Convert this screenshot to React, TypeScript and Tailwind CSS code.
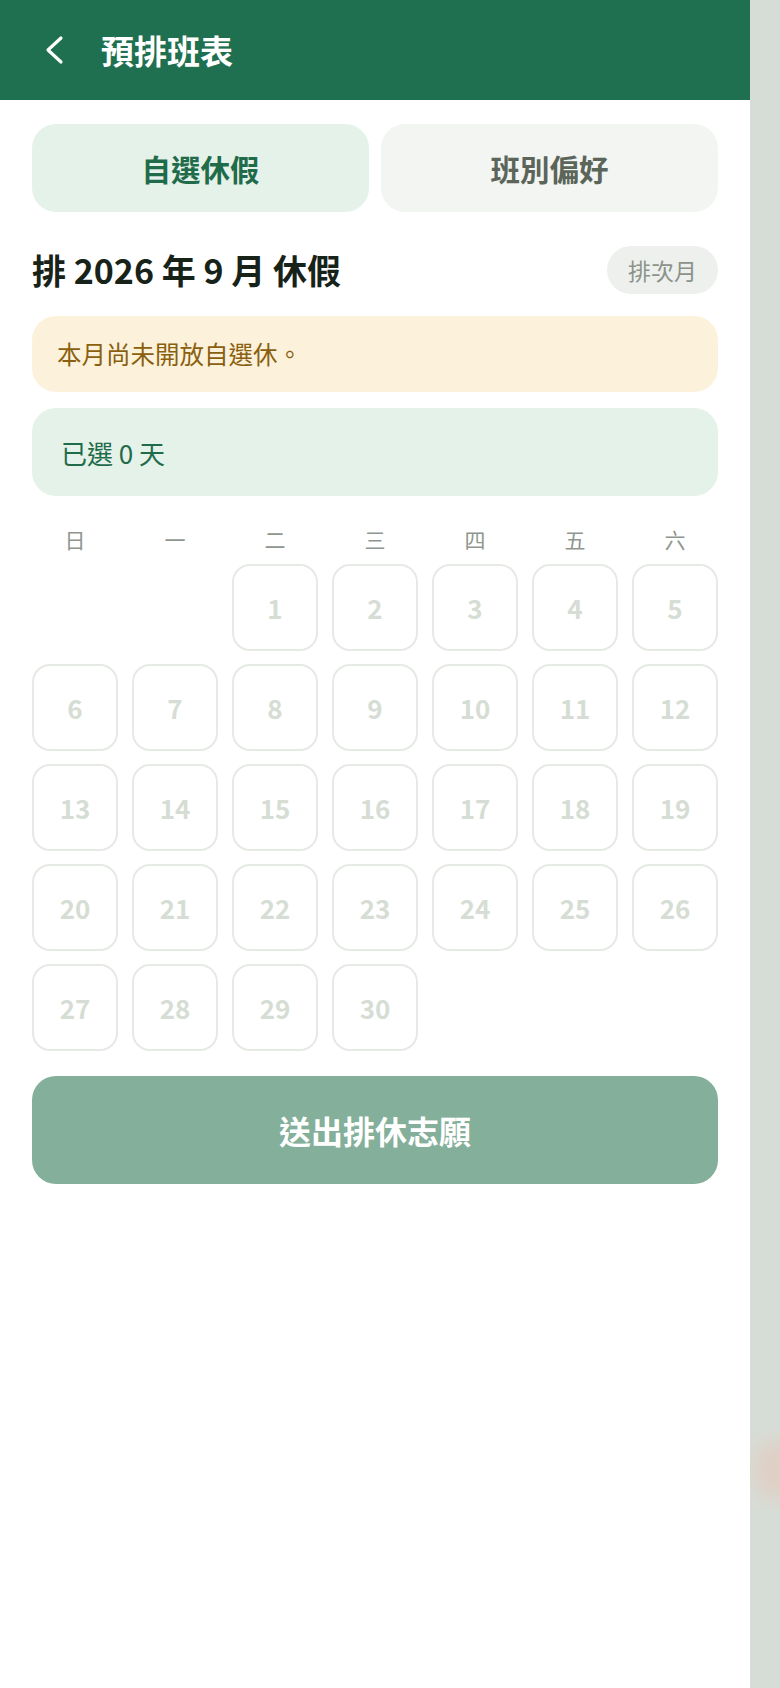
import React from "react";

const days: (number | null)[] = [null, null, ...Array.from({ length: 30 }, (_, i) => i + 1)];
const weekdays = ["日", "一", "二", "三", "四", "五", "六"];

export default function App() {
  return (
    <div
      className="relative flex min-h-[1688px] w-full overflow-hidden bg-[#d6ddd6]"
      style={{ fontFamily: '"Noto Sans CJK TC", "Noto Sans", sans-serif' }}
    >
      <div className="absolute left-[750px] top-[1430px] h-[80px] w-[30px] overflow-hidden">
        <div className="absolute left-[4px] top-[10px] h-[60px] w-[50px] rounded-full bg-[#e7c6ba] opacity-60 blur-[10px]" />
      </div>
      <div className="relative z-10 flex min-h-[1688px] w-[750px] flex-col bg-white">
        <header className="flex h-[100px] items-center bg-[#1f7050] px-[40px]">
          <svg width="26" height="30" viewBox="0 0 26 30" fill="none" className="ml-[2px]">
            <polyline points="19,3 6,15 19,27" stroke="white" strokeWidth="3.2" strokeLinecap="round" strokeLinejoin="round" />
          </svg>
          <h1 className="ml-[33px] text-[33px] font-bold leading-none text-white">預排班表</h1>
        </header>

        <div className="flex flex-col px-[32px]">
          <div className="mt-[24px] grid grid-cols-2 gap-[12px]">
            <button className="flex h-[88px] items-center justify-center rounded-[24px] bg-[#e5f2ea] text-[29.5px] font-bold text-[#1f6b4a]">
              自選休假
            </button>
            <button className="flex h-[88px] items-center justify-center rounded-[24px] bg-[#f2f5f2] text-[29.5px] font-bold text-[#5b6559]">
              班別偏好
            </button>
          </div>

          <div className="mt-[34px] flex h-[48px] items-center justify-between">
            <h2 className="text-[34px] font-bold leading-none text-[#172219]">排 2026 年 9 月 休假</h2>
            <button className="flex h-[48px] w-[111px] items-center justify-center rounded-full bg-[#eef0ed] text-[23px] text-[#8b938b]">
              排次月
            </button>
          </div>

          <div className="mt-[22px] flex h-[76px] items-center rounded-[24px] bg-[#fcf2dc] px-[25px] text-[24.5px] text-[#8a5f0e]">
            本月尚未開放自選休。
          </div>

          <div className="mt-[16px] flex h-[88px] items-center rounded-[24px] bg-[#e5f2ea] px-[29px] text-[26px] text-[#1f6b4a]">
            已選 0 天
          </div>

          <div className="mt-[30px] grid grid-cols-7 gap-x-[14px]">
            {weekdays.map((w) => (
              <div key={w} className="flex h-[28px] items-center justify-center text-[21px] text-[#8e968e]">
                {w}
              </div>
            ))}
          </div>

          <div className="mt-[10px] grid grid-cols-7 gap-x-[14px] gap-y-[13px]">
            {days.map((d, i) =>
              d === null ? (
                <div key={i} />
              ) : (
                <div
                  key={i}
                  className="flex h-[87px] items-center justify-center rounded-[18px] border-2 border-[#e6eae4] text-[26px] font-bold text-[#d6ddd4]"
                >
                  {d}
                </div>
              )
            )}
          </div>

          <button className="mt-[25px] flex h-[108px] items-center justify-center rounded-[24px] bg-[#84af9a] text-[32px] font-bold text-white">
            送出排休志願
          </button>
        </div>
      </div>
    </div>
  );
}
